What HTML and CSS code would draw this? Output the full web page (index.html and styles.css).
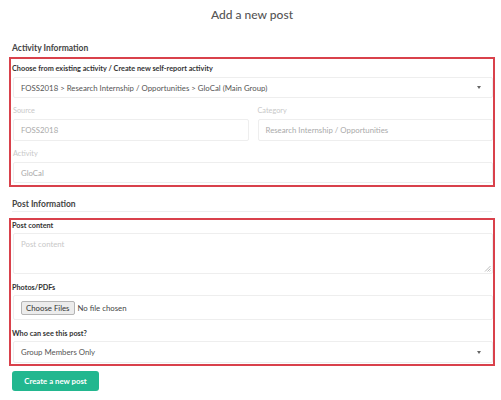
FILE: index.html
```html
<!DOCTYPE html>
<html>
<head>
<meta charset="utf-8">
<link rel="stylesheet" href="styles.css">
</head>
<body>
<div class="page">
  <div class="title">Add a new post</div>

  <div class="heading first">Activity Information</div>
  <div class="group">
    <div class="label lab-top">Choose from existing activity / Create new self-report activity</div>
    <div class="control select h21">
      <span>FOSS2018 &gt; Research Internship / Opportunities &gt; GloCal (Main Group)</span>
      <span class="caret"></span>
    </div>
    <div class="row">
      <div class="col">
        <div class="label muted">Source</div>
        <div class="control disabled h22">FOSS2018</div>
      </div>
      <div class="col">
        <div class="label muted">Category</div>
        <div class="control disabled h22">Research Internship / Opportunities</div>
      </div>
    </div>
    <div class="label muted">Activity</div>
    <div class="control disabled h21">GloCal</div>
  </div>

  <div class="heading second">Post Information</div>
  <div class="group g2">
    <div class="label lab-top2">Post content</div>
    <div class="control textarea">
      <span class="placeholder">Post content</span>
      <svg class="grip" width="7" height="7" viewBox="0 0 7 7"><path d="M6.5 1 L1 6.5 M6.5 3.5 L3.5 6.5 M6.5 5.5 L5.5 6.5" stroke="#aaa" stroke-width="0.8" fill="none"/></svg>
    </div>
    <div class="label">Photos/PDFs</div>
    <div class="control file">
      <span class="filebtn">Choose Files</span>
      <span class="filetext">No file chosen</span>
    </div>
    <div class="label">Who can see this post?</div>
    <div class="control select h22">
      <span>Group Members Only</span>
      <span class="caret"></span>
    </div>
  </div>

  <div class="btnrow"><span class="btn">Create a new post</span></div>
</div>
</body>
</html>
```
FILE: styles.css
```css
html, body {
  margin: 0;
  padding: 0;
  background: #fff;
}
body {
  font-family: Lato, "Open Sans", Arial, sans-serif;
  color: #333;
}
.page {
  width: 486px;
  margin-left: 9px;
}
.title {
  height: 30px;
  line-height: 30px;
  text-align: center;
  font-size: 12px;
  color: #555;
  font-weight: 500;
}
.heading {
  margin-left: 3px;
  margin-right: 3px;
  font-size: 8.5px;
  font-weight: 700;
  color: #444;
  line-height: 12px;
}
.heading.first {
  margin-top: 12px;
  margin-bottom: 3px;
}
.heading.second {
  margin-top: 11px;
  padding-bottom: 1px;
  border-bottom: 1px solid #eee;
  margin-bottom: 6px;
}
.group {
  border: 2px solid #d9414b;
  padding: 0 0 2px 2px;
}
.group.g2 {
  padding-bottom: 1px;
}
.label {
  height: 21px;
  display: flex;
  align-items: flex-end;
  padding-bottom: 3px;
  box-sizing: border-box;
  font-size: 7.3px;
  font-weight: 700;
  color: #333;
  margin-left: -1px;
}
.label.lab-top {
  height: 18px;
  padding-bottom: 4px;
}
.label.lab-top2 {
  height: 13px;
  padding-bottom: 3px;
}
.label.muted {
  font-weight: 400;
  color: #c8c8c8;
  padding-bottom: 4px;
  margin-left: 0;
}
.control {
  box-sizing: border-box;
  border: 1px solid #eee;
  border-radius: 2px;
  font-size: 7.8px;
  color: #555;
  display: flex;
  align-items: center;
  padding: 0 7px;
  background: #fff;
}
.h21 { height: 21px; }
.h22 { height: 22px; }
.select {
  justify-content: space-between;
}
.caret {
  width: 0;
  height: 0;
  border-left: 2.5px solid transparent;
  border-right: 2.5px solid transparent;
  border-top: 3px solid #666;
  margin-right: 4px;
}
.disabled {
  color: #aaa;
}
.row {
  display: flex;
  gap: 9px;
}
.col {
  flex: 1;
}
.textarea {
  height: 41px;
  align-items: flex-start;
  padding-top: 5px;
  position: relative;
}
.placeholder {
  color: #c8c8c8;
}
.grip {
  position: absolute;
  right: 1px;
  bottom: 1px;
}
.file {
  height: 25px;
  padding-left: 7px;
}
.filebtn {
  background: #ececec;
  border: 1px solid #b5b5b5;
  border-radius: 2px;
  color: #333;
  height: 12px;
  line-height: 12px;
  padding: 0 4px;
  font-size: 7.8px;
  margin-right: 3px;
}
.filetext {
  color: #444;
}
.btnrow {
  margin-top: 5px;
  margin-left: 3px;
  display: flex;
}
.btn {
  width: 87px;
  height: 20px;
  line-height: 20px;
  text-align: center;
  background: #22b78f;
  color: #fff;
  font-size: 7.8px;
  font-weight: 700;
  border-radius: 3px;
}
```
